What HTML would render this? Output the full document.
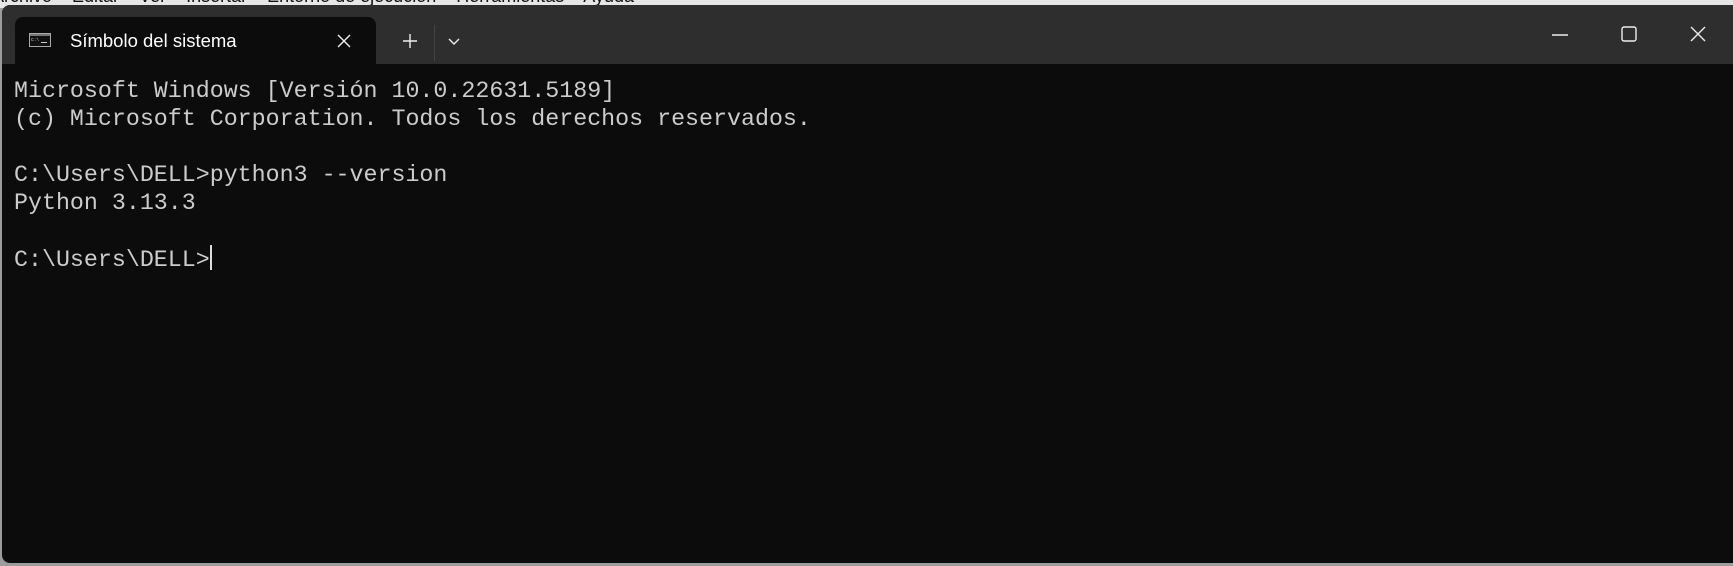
<!DOCTYPE html>
<html><head><meta charset="utf-8"><style>
html,body{margin:0;padding:0;width:1733px;height:566px;overflow:hidden;background:#9c9c9c;font-family:"Liberation Sans",sans-serif}
.top{position:absolute;left:0;top:0;width:1733px;height:8px;background:#e6e6e6;overflow:hidden}
.top span{position:absolute;top:-14px;font-size:18px;color:#111;white-space:pre}
.win{position:absolute;left:2px;top:5px;width:1740px;height:558px;background:#0c0c0c;border-radius:8px;overflow:hidden}
.bar{position:absolute;left:0;top:0;right:0;height:59px;background:#2e2e2e}
.tab{position:absolute;left:13px;top:12px;width:361px;height:47px;background:#0c0c0c;border-radius:8px 8px 0 0}
.title{position:absolute;left:55px;top:13px;font-size:18.5px;color:#fff}
.term{position:absolute;left:12px;top:72px;font-family:"Liberation Mono",monospace;font-size:23.3px;line-height:28px;color:#cccccc;white-space:pre}
.cur{display:inline-block;width:2px;height:25px;background:#ddd;vertical-align:-4px}
svg{position:absolute}
</style></head><body>
<div class="top"><span style="left:-8px">Archivo    Editar    Ver    Insertar    Entorno de ejecución    Herramientas    Ayuda</span></div>
<div class="win">
<div class="bar"></div>
<div class="tab">
<svg style="left:14px;top:16px" width="22" height="14" viewBox="0 0 22 14"><rect x="0.5" y="0.5" width="21" height="13" fill="#111" stroke="#aaa"/><rect x="1" y="1" width="20" height="2" fill="#777"/><text x="2" y="8" font-size="4.5" fill="#ccc" font-family="Liberation Mono">C:\</text><rect x="12" y="9" width="6" height="1" fill="#ccc"/></svg>
<div class="title">Símbolo del sistema</div>
<svg style="left:322px;top:17px" width="14" height="14" viewBox="0 0 14 14"><path d="M1 1L13 13M13 1L1 13" stroke="#eee" stroke-width="1.4"/></svg>
</div>
<svg style="left:400px;top:28px" width="16" height="16" viewBox="0 0 16 16"><path d="M8 1V15M1 8H15" stroke="#eee" stroke-width="1.4"/></svg>
<div style="position:absolute;left:432px;top:20px;width:1px;height:36px;background:#444"></div>
<svg style="left:445px;top:32px" width="14" height="10" viewBox="0 0 14 10"><path d="M2 2L7 7L12 2" stroke="#eee" stroke-width="1.4" fill="none"/></svg>
<svg style="left:1550px;top:28px" width="16" height="4"><path d="M0 2H16" stroke="#eee" stroke-width="1.4"/></svg>
<svg style="left:1619px;top:21px" width="16" height="16"><rect x="1" y="1" width="14" height="14" rx="2" fill="none" stroke="#eee" stroke-width="1.4"/></svg>
<svg style="left:1688px;top:21px" width="16" height="16"><path d="M1 1L15 15M15 1L1 15" stroke="#eee" stroke-width="1.4"/></svg>
<div class="term">Microsoft Windows [Versión 10.0.22631.5189]
(c) Microsoft Corporation. Todos los derechos reservados.

C:\Users\DELL&gt;python3 --version
Python 3.13.3

C:\Users\DELL&gt;<span class="cur"></span></div>
</div>
</body></html>
